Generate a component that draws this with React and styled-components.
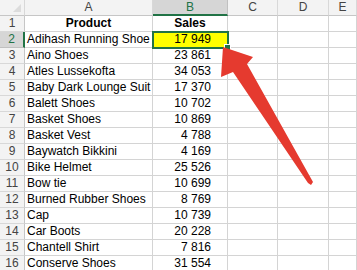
import React from "react";
import styled, { createGlobalStyle } from "styled-components";

const GlobalStyle = createGlobalStyle`
  body {
    margin: 0;
    background: #ffffff;
    font-family: "Liberation Sans", Arial, sans-serif;
  }
`;

const green = "#217346";
const grid = "#d4d4d4";
const columns = "25px 128px 75px 50px 51px 1fr";

const rows = [
  ["Adihash Running Shoe", "17 949"],
  ["Aino Shoes", "23 861"],
  ["Atles Lussekofta", "34 053"],
  ["Baby Dark Lounge Suit", "17 370"],
  ["Balett Shoes", "10 702"],
  ["Basket Shoes", "10 869"],
  ["Basket Vest", "4 788"],
  ["Baywatch Bikkini", "4 169"],
  ["Bike Helmet", "25 526"],
  ["Bow tie", "10 699"],
  ["Burned Rubber Shoes", "8 769"],
  ["Cap", "10 739"],
  ["Car Boots", "20 228"],
  ["Chantell Shirt", "7 816"],
  ["Conserve Shoes", "31 554"],
];

const Sheet = styled.div`
  position: relative;
  width: 357px;
  height: 270px;
  overflow: hidden;
  background: #ffffff;
`;

const Row = styled.div`
  display: grid;
  grid-template-columns: ${columns};
  height: 16px;
`;

const Cell = styled.div`
  box-sizing: border-box;
  height: 16px;
  border-right: 1px solid ${grid};
  border-bottom: 1px solid ${grid};
  font-size: 12px;
  line-height: 15px;
  color: #000;
  white-space: nowrap;
  overflow: visible;
  padding: ${(p) => (p.$num ? "0 16px 0 0" : "0 2px")};
  text-align: ${(p) => (p.$num ? "right" : p.$center ? "center" : "left")};
  font-weight: ${(p) => (p.$bold ? 700 : 400)};
`;

const ColHead = styled.div`
  box-sizing: border-box;
  height: 16px;
  background: ${(p) => (p.$active ? "#d6d6d6" : "#f3f3f3")};
  border-right: 1px solid ${(p) => (p.$active ? "#c0c0c0" : "#d8d8d8")};
  border-bottom: ${(p) => (p.$active ? `2px solid ${green}` : "1px solid #c6c6c6")};
  color: ${(p) => (p.$active ? green : "#444")};
  font-size: 12px;
  line-height: 15px;
  text-align: center;
  overflow: hidden;
`;

const Corner = styled(ColHead)`
  position: relative;
  &::after {
    content: "";
    position: absolute;
    right: 3px;
    bottom: 3px;
    border-left: 8px solid transparent;
    border-bottom: 8px solid #dcdcdc;
  }
`;

const RowHead = styled.div`
  box-sizing: border-box;
  height: 16px;
  background: ${(p) => (p.$active ? "#d6d6d6" : "#f3f3f3")};
  border-bottom: 1px solid ${(p) => (p.$active ? "#c0c0c0" : "#d8d8d8")};
  border-right: ${(p) => (p.$active ? `2px solid ${green}` : "1px solid #c6c6c6")};
  color: ${(p) => (p.$active ? green : "#444")};
  font-size: 12px;
  line-height: 15px;
  text-align: center;
`;

const SelectedCell = styled(Cell)`
  position: relative;
  background: #ffff00;
  outline: 2px solid ${green};
  outline-offset: -1px;
  z-index: 1;
  &::after {
    content: "";
    position: absolute;
    right: -4px;
    bottom: -4px;
    width: 5px;
    height: 5px;
    background: ${green};
    border: 1px solid #ffffff;
  }
`;

const Arrow = styled.svg`
  position: absolute;
  left: 0;
  top: 0;
  z-index: 2;
  pointer-events: none;
`;

export default function App() {
  return (
    <>
      <GlobalStyle />
      <Sheet>
        <Row>
          <Corner />
          <ColHead>A</ColHead>
          <ColHead $active>B</ColHead>
          <ColHead>C</ColHead>
          <ColHead>D</ColHead>
          <ColHead>E</ColHead>
        </Row>
        <Row>
          <RowHead>1</RowHead>
          <Cell $center $bold>Product</Cell>
          <Cell $center $bold>Sales</Cell>
          <Cell />
          <Cell />
          <Cell />
        </Row>
        {rows.map(([name, sales], i) => {
          const active = i === 0;
          const SalesCell = active ? SelectedCell : Cell;
          return (
            <Row key={name}>
              <RowHead $active={active}>{i + 2}</RowHead>
              <Cell>{name}</Cell>
              <SalesCell $num>{sales}</SalesCell>
              <Cell />
              <Cell />
              <Cell />
            </Row>
          );
        })}
        <Arrow width="357" height="270" viewBox="0 0 357 270">
          <polygon
            points="223,47 253,57 247,64 313,182 311,185 308,183 233,72 221,77"
            fill="#e53a2f"
          />
        </Arrow>
      </Sheet>
    </>
  );
}
